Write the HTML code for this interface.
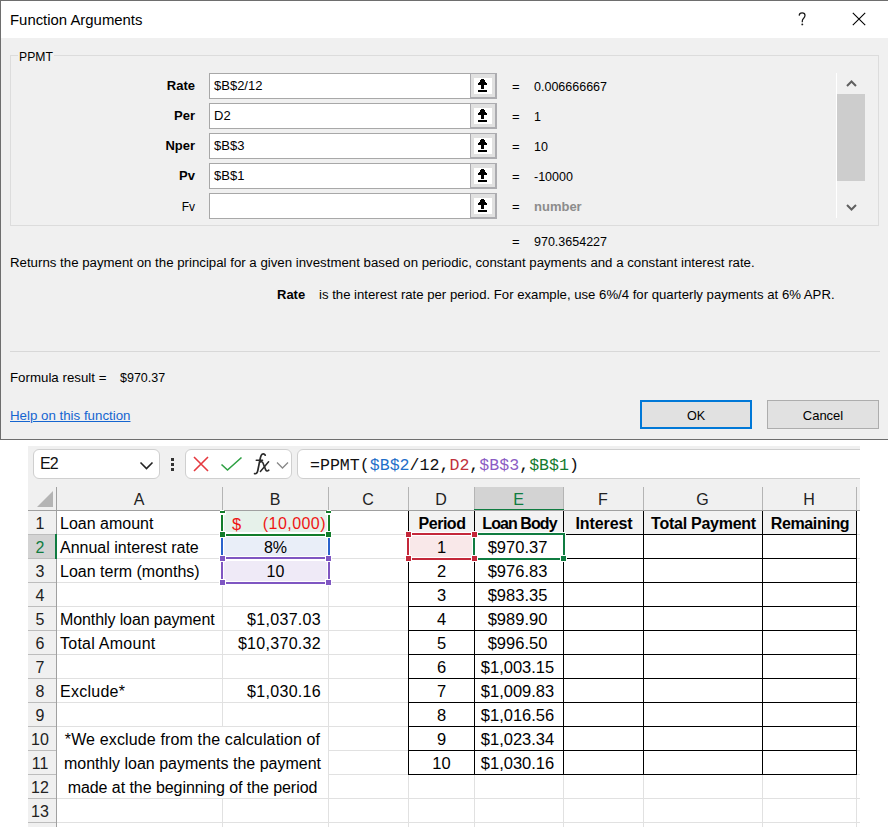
<!DOCTYPE html>
<html><head><meta charset="utf-8">
<style>
*{margin:0;padding:0;box-sizing:border-box}
html,body{width:888px;height:827px;overflow:hidden;background:#fff;font-family:"Liberation Sans",sans-serif;color:#000}
div,span,svg{position:absolute}
.t{white-space:nowrap;font-size:13px;line-height:16px}
.lbl{white-space:nowrap;font-size:13px;line-height:16px;text-align:right;width:100px;left:95px}
.inp{left:209px;width:262px;height:26px;background:#fff;border:1px solid #a8a8a8}
.inp span{left:4px;top:4px;font-size:13px;line-height:16px;white-space:nowrap}
.eq{left:512px;font-size:13px;line-height:16px}
.val{left:534px;font-size:12.5px;line-height:16px;white-space:nowrap}
.ch{top:488px;height:23px;font-size:16px;line-height:23px;text-align:center;color:#222}
.rh{left:28px;width:28px;height:24px;font-size:16px;line-height:24px;text-align:center;color:#222}
.c{height:24px;font-size:16px;line-height:24px;white-space:nowrap}
.mono{font-family:"Liberation Mono",monospace}
</style></head><body>
<div style="left:0;top:0;width:900px;height:440px;background:#f0f0f0;border:1px solid #6e6e6e;border-right:none"></div>
<div style="left:1px;top:1px;width:900px;height:37px;background:#fff"></div>
<div class="t" style="left:10px;top:11px;font-size:14.9px;line-height:18px">Function Arguments</div>
<svg style="left:797px;top:11px" width="10" height="16"><path d="M2.2 4.6C2.3 2.8 3.5 1.9 5.1 1.9C6.9 1.9 8 3 8 4.6C8 6.1 7.2 6.9 6.3 7.7C5.6 8.3 5.3 9 5.3 10.2V11.3" fill="none" stroke="#1a1a1a" stroke-width="1.25"/><circle cx="5.3" cy="13.4" r="0.95" fill="#1a1a1a"/></svg>
<svg style="left:852px;top:12px" width="14" height="14"><path d="M0.8 0.8L13.2 13.2M13.2 0.8L0.8 13.2" stroke="#000" stroke-width="1.1"/></svg>
<div style="left:10px;top:55px;width:869px;height:171px;border:1px solid #dcdcdc"></div>
<div class="t" style="left:18px;top:49px;padding:0 1px;background:#f0f0f0;font-size:12.2px">PPMT</div>
<div class="lbl" style="top:78px;font-weight:bold">Rate</div>
<div class="inp" style="top:73px"><span>$B$2/12</span></div>
<div style="left:470px;top:73px;width:27px;height:26px;background:#acacb0"></div>
<div style="left:471px;top:74px;width:24px;height:23px;background:#e1e1e1"></div>
<div style="left:474px;top:78px;width:18px;height:16px;background:#fff"></div>
<svg style="left:478px;top:79px" width="9" height="13" shape-rendering="crispEdges"><path d="M3 0H6V1H7V3H8V4H9V6H6V10H3V6H0V4H1V3H2V1H3Z M0 11H9V13H0Z" fill="#000"/></svg>
<div class="eq" style="top:79px">=</div>
<div class="val" style="top:79px">0.006666667</div>
<div class="lbl" style="top:108px;font-weight:bold">Per</div>
<div class="inp" style="top:103px"><span>D2</span></div>
<div style="left:470px;top:103px;width:27px;height:26px;background:#acacb0"></div>
<div style="left:471px;top:104px;width:24px;height:23px;background:#e1e1e1"></div>
<div style="left:474px;top:108px;width:18px;height:16px;background:#fff"></div>
<svg style="left:478px;top:109px" width="9" height="13" shape-rendering="crispEdges"><path d="M3 0H6V1H7V3H8V4H9V6H6V10H3V6H0V4H1V3H2V1H3Z M0 11H9V13H0Z" fill="#000"/></svg>
<div class="eq" style="top:109px">=</div>
<div class="val" style="top:109px">1</div>
<div class="lbl" style="top:138px;font-weight:bold">Nper</div>
<div class="inp" style="top:133px"><span>$B$3</span></div>
<div style="left:470px;top:133px;width:27px;height:26px;background:#acacb0"></div>
<div style="left:471px;top:134px;width:24px;height:23px;background:#e1e1e1"></div>
<div style="left:474px;top:138px;width:18px;height:16px;background:#fff"></div>
<svg style="left:478px;top:139px" width="9" height="13" shape-rendering="crispEdges"><path d="M3 0H6V1H7V3H8V4H9V6H6V10H3V6H0V4H1V3H2V1H3Z M0 11H9V13H0Z" fill="#000"/></svg>
<div class="eq" style="top:139px">=</div>
<div class="val" style="top:139px">10</div>
<div class="lbl" style="top:168px;font-weight:bold">Pv</div>
<div class="inp" style="top:163px"><span>$B$1</span></div>
<div style="left:470px;top:163px;width:27px;height:26px;background:#acacb0"></div>
<div style="left:471px;top:164px;width:24px;height:23px;background:#e1e1e1"></div>
<div style="left:474px;top:168px;width:18px;height:16px;background:#fff"></div>
<svg style="left:478px;top:169px" width="9" height="13" shape-rendering="crispEdges"><path d="M3 0H6V1H7V3H8V4H9V6H6V10H3V6H0V4H1V3H2V1H3Z M0 11H9V13H0Z" fill="#000"/></svg>
<div class="eq" style="top:169px">=</div>
<div class="val" style="top:169px">-10000</div>
<div class="lbl" style="top:199px;font-size:12px">Fv</div>
<div class="inp" style="top:193px"><span></span></div>
<div style="left:470px;top:193px;width:27px;height:26px;background:#acacb0"></div>
<div style="left:471px;top:194px;width:24px;height:23px;background:#e1e1e1"></div>
<div style="left:474px;top:198px;width:18px;height:16px;background:#fff"></div>
<svg style="left:478px;top:199px" width="9" height="13" shape-rendering="crispEdges"><path d="M3 0H6V1H7V3H8V4H9V6H6V10H3V6H0V4H1V3H2V1H3Z M0 11H9V13H0Z" fill="#000"/></svg>
<div class="eq" style="top:199px">=</div>
<div class="val" style="top:199px;color:#8c8c8c;font-weight:bold;font-size:13px">number</div>
<div style="left:836px;top:73px;width:1px;height:145px;background:#fff"></div>
<div style="left:837px;top:94px;width:28px;height:87px;background:#cdcdcd"></div>
<svg style="left:846px;top:79px" width="11" height="9"><path d="M1 7L5.5 2.5L10 7" fill="none" stroke="#606060" stroke-width="2"/></svg>
<svg style="left:846px;top:203px" width="11" height="9"><path d="M1 2L5.5 6.5L10 2" fill="none" stroke="#606060" stroke-width="2"/></svg>
<div class="eq" style="top:234px">=</div><div class="val" style="top:234px">970.3654227</div>
<div class="t" style="left:10px;top:255px;font-size:13.25px">Returns the payment on the principal for a given investment based on periodic, constant payments and a constant interest rate.</div>
<div class="t" style="left:277px;top:287px;font-weight:bold">Rate</div>
<div class="t" style="left:319px;top:287px;font-size:13.17px">is the interest rate per period. For example, use 6%/4 for quarterly payments at 6% APR.</div>
<div style="left:10px;top:351px;width:870px;height:1px;background:#d8d8d8"></div>
<div class="t" style="left:10px;top:370px;font-size:13.3px">Formula result =</div>
<div class="t" style="left:120px;top:370px;font-size:12.5px">$970.37</div>
<div class="t" style="left:10px;top:408px;font-size:13.3px;color:#1565d0;text-decoration:underline">Help on this function</div>
<div style="left:640px;top:400px;width:112px;height:29px;background:#e1e1e1;border:2px solid #0078d7"></div>
<div class="t" style="left:640px;top:408px;width:112px;text-align:center;font-size:12.6px">OK</div>
<div style="left:767px;top:400px;width:112px;height:29px;background:#e1e1e1;border:1px solid #adadad"></div>
<div class="t" style="left:767px;top:408px;width:112px;text-align:center">Cancel</div>
<div style="left:28px;top:446px;width:832px;height:64px;background:#f0f0f0"></div>
<div style="left:28px;top:510px;width:28px;height:317px;background:#f0f0f0"></div>
<div style="left:33px;top:449px;width:127px;height:30px;background:#fff;border:1px solid #cfcfcf;border-radius:6px"></div>
<div class="c" style="left:40px;top:451px;line-height:26px;color:#111;font-size:16px;letter-spacing:-1px">E2</div>
<svg style="left:139px;top:460px" width="15" height="11"><path d="M1.5 2.5L7.5 8.5L13.5 2.5" fill="none" stroke="#222" stroke-width="1.6"/></svg>
<div style="left:171px;top:458px;width:3px;height:3px;background:#333"></div>
<div style="left:171px;top:463px;width:3px;height:3px;background:#333"></div>
<div style="left:171px;top:468px;width:3px;height:3px;background:#333"></div>
<div style="left:185px;top:449px;width:107px;height:30px;background:#fff;border:1px solid #cfcfcf;border-radius:6px"></div>
<svg style="left:192px;top:455px" width="18" height="18"><path d="M2 2L16 16M16 2L2 16" stroke="#e5393f" stroke-width="1.6"/></svg>
<svg style="left:220px;top:456px" width="23" height="16"><path d="M1.5 8.5L7.5 14L21.5 1.5" fill="none" stroke="#2ea043" stroke-width="1.6"/></svg>
<svg style="left:250px;top:452px" width="22" height="24"><g fill="none" stroke="#2a2a2a" stroke-linecap="round"><path d="M15.2 3.2C14.5 1.6 12.2 1.4 11.2 3.4C10.6 4.6 10.2 6.5 9.8 8.5L7.8 18.5C7.3 21 6.2 22.2 4.6 21.6" stroke-width="1.7"/><path d="M6.2 8.3H12.6" stroke-width="1.4"/><path d="M9.8 10.2C11.2 9.2 12.4 9.6 13 11L15.6 17.6C16.2 19.2 17.4 19.4 18.8 18.2" stroke-width="1.6"/><path d="M18.6 9.8L10.4 19.4" stroke-width="1.5"/></g></svg>
<svg style="left:276px;top:461px" width="13" height="9"><path d="M1 1.5L6.5 7L12 1.5" fill="none" stroke="#888" stroke-width="1.3"/></svg>
<div style="left:297px;top:449px;width:600px;height:30px;background:#fff;border:1px solid #cfcfcf;border-radius:6px"></div>
<div class="mono" style="left:310px;top:454px;font-size:16.6px;line-height:24px;white-space:nowrap;color:#111">=PPMT(<span style="position:static;color:#1f6fc9">$B$2</span>/12,<span style="position:static;color:#c0313b">D2</span>,<span style="position:static;color:#8b5cc4">$B$3</span>,<span style="position:static;color:#157a2f">$B$1</span>)</div>
<div style="left:860px;top:440px;width:40px;height:400px;background:#fff"></div>
<div style="left:56px;top:487px;width:1px;height:23px;background:#b4b4b4"></div>
<div style="left:222px;top:487px;width:1px;height:23px;background:#b4b4b4"></div>
<div style="left:328px;top:487px;width:1px;height:23px;background:#b4b4b4"></div>
<div style="left:408px;top:487px;width:1px;height:23px;background:#b4b4b4"></div>
<div style="left:474px;top:487px;width:1px;height:23px;background:#b4b4b4"></div>
<div style="left:563px;top:487px;width:1px;height:23px;background:#b4b4b4"></div>
<div style="left:643px;top:487px;width:1px;height:23px;background:#b4b4b4"></div>
<div style="left:762px;top:487px;width:1px;height:23px;background:#b4b4b4"></div>
<div style="left:856px;top:487px;width:1px;height:23px;background:#b4b4b4"></div>
<div style="left:475px;top:487px;width:88px;height:23px;background:#d3d3d3"></div>
<div style="left:474px;top:509px;width:90px;height:2px;background:#107c41"></div>
<div class="ch" style="left:56px;width:166px;color:#222">A</div>
<div class="ch" style="left:222px;width:106px;color:#222">B</div>
<div class="ch" style="left:328px;width:80px;color:#222">C</div>
<div class="ch" style="left:408px;width:66px;color:#222">D</div>
<div class="ch" style="left:474px;width:89px;color:#107c41">E</div>
<div class="ch" style="left:563px;width:80px;color:#222">F</div>
<div class="ch" style="left:643px;width:119px;color:#222">G</div>
<div class="ch" style="left:762px;width:94px;color:#222">H</div>
<div style="left:28px;top:510px;width:832px;height:1px;background:#a0a0a0"></div>
<div style="left:56px;top:487px;width:1px;height:340px;background:#a0a0a0"></div>
<svg style="left:37px;top:491px" width="17" height="17"><path d="M16 0V16H0Z" fill="#b4b4b4"/></svg>
<div style="left:28px;top:534px;width:28px;height:1px;background:#bdbdbd"></div>
<div style="left:57px;top:534px;width:803px;height:1px;background:#e1e1e1"></div>
<div style="left:28px;top:558px;width:28px;height:1px;background:#bdbdbd"></div>
<div style="left:57px;top:558px;width:803px;height:1px;background:#e1e1e1"></div>
<div style="left:28px;top:582px;width:28px;height:1px;background:#bdbdbd"></div>
<div style="left:57px;top:582px;width:803px;height:1px;background:#e1e1e1"></div>
<div style="left:28px;top:606px;width:28px;height:1px;background:#bdbdbd"></div>
<div style="left:57px;top:606px;width:803px;height:1px;background:#e1e1e1"></div>
<div style="left:28px;top:630px;width:28px;height:1px;background:#bdbdbd"></div>
<div style="left:57px;top:630px;width:803px;height:1px;background:#e1e1e1"></div>
<div style="left:28px;top:654px;width:28px;height:1px;background:#bdbdbd"></div>
<div style="left:57px;top:654px;width:803px;height:1px;background:#e1e1e1"></div>
<div style="left:28px;top:678px;width:28px;height:1px;background:#bdbdbd"></div>
<div style="left:57px;top:678px;width:803px;height:1px;background:#e1e1e1"></div>
<div style="left:28px;top:702px;width:28px;height:1px;background:#bdbdbd"></div>
<div style="left:57px;top:702px;width:803px;height:1px;background:#e1e1e1"></div>
<div style="left:28px;top:726px;width:28px;height:1px;background:#bdbdbd"></div>
<div style="left:57px;top:726px;width:803px;height:1px;background:#e1e1e1"></div>
<div style="left:28px;top:750px;width:28px;height:1px;background:#bdbdbd"></div>
<div style="left:57px;top:750px;width:803px;height:1px;background:#e1e1e1"></div>
<div style="left:28px;top:774px;width:28px;height:1px;background:#bdbdbd"></div>
<div style="left:57px;top:774px;width:803px;height:1px;background:#e1e1e1"></div>
<div style="left:28px;top:798px;width:28px;height:1px;background:#bdbdbd"></div>
<div style="left:57px;top:798px;width:803px;height:1px;background:#e1e1e1"></div>
<div style="left:28px;top:822px;width:28px;height:1px;background:#bdbdbd"></div>
<div style="left:57px;top:822px;width:803px;height:1px;background:#e1e1e1"></div>
<div style="left:222px;top:511px;width:1px;height:316px;background:#e1e1e1"></div>
<div style="left:328px;top:511px;width:1px;height:316px;background:#e1e1e1"></div>
<div style="left:408px;top:511px;width:1px;height:316px;background:#e1e1e1"></div>
<div style="left:474px;top:511px;width:1px;height:316px;background:#e1e1e1"></div>
<div style="left:563px;top:511px;width:1px;height:316px;background:#e1e1e1"></div>
<div style="left:643px;top:511px;width:1px;height:316px;background:#e1e1e1"></div>
<div style="left:762px;top:511px;width:1px;height:316px;background:#e1e1e1"></div>
<div style="left:856px;top:511px;width:1px;height:316px;background:#e1e1e1"></div>
<div style="left:28px;top:535px;width:27px;height:23px;background:#d3d3d3"></div>
<div style="left:55px;top:534px;width:2px;height:25px;background:#107c41"></div>
<div class="rh" style="top:512px;left:26px;color:#222">1</div>
<div class="rh" style="top:536px;left:26px;color:#107c41">2</div>
<div class="rh" style="top:560px;left:26px;color:#222">3</div>
<div class="rh" style="top:584px;left:26px;color:#222">4</div>
<div class="rh" style="top:608px;left:26px;color:#222">5</div>
<div class="rh" style="top:632px;left:26px;color:#222">6</div>
<div class="rh" style="top:656px;left:26px;color:#222">7</div>
<div class="rh" style="top:680px;left:26px;color:#222">8</div>
<div class="rh" style="top:704px;left:26px;color:#222">9</div>
<div class="rh" style="top:728px;left:26px;color:#222">10</div>
<div class="rh" style="top:752px;left:26px;color:#222">11</div>
<div class="rh" style="top:776px;left:26px;color:#222">12</div>
<div class="rh" style="top:800px;left:26px;color:#222">13</div>
<div style="left:57px;top:727px;width:271px;height:71px;background:#fff"></div>
<div style="left:409px;top:511px;width:447px;height:23px;background:#f2f2f2"></div>
<div style="left:223px;top:511px;width:105px;height:23px;background:#e6f1ea"></div>
<div style="left:223px;top:535px;width:105px;height:23px;background:#e9eef8"></div>
<div style="left:223px;top:559px;width:105px;height:23px;background:#efeaf7"></div>
<div style="left:409px;top:535px;width:65px;height:23px;background:#f9e8e9"></div>
<div style="left:408px;top:534px;width:449px;height:1px;background:#000"></div>
<div style="left:408px;top:558px;width:449px;height:1px;background:#000"></div>
<div style="left:408px;top:582px;width:449px;height:1px;background:#000"></div>
<div style="left:408px;top:606px;width:449px;height:1px;background:#000"></div>
<div style="left:408px;top:630px;width:449px;height:1px;background:#000"></div>
<div style="left:408px;top:654px;width:449px;height:1px;background:#000"></div>
<div style="left:408px;top:678px;width:449px;height:1px;background:#000"></div>
<div style="left:408px;top:702px;width:449px;height:1px;background:#000"></div>
<div style="left:408px;top:726px;width:449px;height:1px;background:#000"></div>
<div style="left:408px;top:750px;width:449px;height:1px;background:#000"></div>
<div style="left:408px;top:774px;width:449px;height:1px;background:#000"></div>
<div style="left:408px;top:511px;width:1px;height:264px;background:#000"></div>
<div style="left:474px;top:511px;width:1px;height:264px;background:#000"></div>
<div style="left:563px;top:511px;width:1px;height:264px;background:#000"></div>
<div style="left:643px;top:511px;width:1px;height:264px;background:#000"></div>
<div style="left:762px;top:511px;width:1px;height:264px;background:#000"></div>
<div style="left:856px;top:511px;width:1px;height:264px;background:#000"></div>
<div class="c" style="left:60px;top:512px;">Loan amount</div>
<div class="c" style="left:60px;top:536px;">Annual interest rate</div>
<div class="c" style="left:60px;top:560px;">Loan term (months)</div>
<div class="c" style="left:60px;top:608px;letter-spacing:-0.1px">Monthly loan payment</div>
<div class="c" style="left:60px;top:632px;letter-spacing:0.25px">Total Amount</div>
<div class="c" style="left:60px;top:680px;letter-spacing:0.25px">Exclude*</div>
<div class="c" style="left:232px;top:512px;color:#ee1515;font-size:16.5px">$</div>
<div class="c" style="left:223px;width:103px;text-align:right;top:512px;color:#ee1515;letter-spacing:0.45px">(10,000)</div>
<div class="c" style="left:223px;width:105px;text-align:center;top:536px;">8%</div>
<div class="c" style="left:223px;width:105px;text-align:center;top:560px;">10</div>
<div class="c" style="left:223px;width:98px;text-align:right;top:608px;letter-spacing:0.3px">$1,037.03</div>
<div class="c" style="left:223px;width:98px;text-align:right;top:632px;letter-spacing:0.3px">$10,370.32</div>
<div class="c" style="left:223px;width:98px;text-align:right;top:680px;letter-spacing:0.3px">$1,030.16</div>
<div class="c" style="left:57px;width:271px;text-align:center;top:728px;letter-spacing:0.14px">*We exclude from the calculation of</div>
<div class="c" style="left:57px;width:271px;text-align:center;top:752px;">monthly loan payments the payment</div>
<div class="c" style="left:57px;width:271px;text-align:center;top:776px;letter-spacing:-0.06px">made at the beginning of the period</div>
<div class="c" style="left:409px;width:66px;text-align:center;top:512px;font-weight:bold;font-size:16px;letter-spacing:-0.47px">Period</div>
<div class="c" style="left:475px;width:89px;text-align:center;top:512px;font-weight:bold;font-size:16px;letter-spacing:-0.92px">Loan Body</div>
<div class="c" style="left:564px;width:80px;text-align:center;top:512px;font-weight:bold;font-size:16px;letter-spacing:-0.1px">Interest</div>
<div class="c" style="left:644px;width:119px;text-align:center;top:512px;font-weight:bold;font-size:16px;letter-spacing:-0.26px">Total Payment</div>
<div class="c" style="left:763px;width:94px;text-align:center;top:512px;font-weight:bold;font-size:16px;letter-spacing:-0.37px">Remaining</div>
<div class="c" style="left:408px;width:67px;text-align:center;top:535px;font-size:16.5px">1</div>
<div class="c" style="left:473px;width:89px;text-align:center;top:535px;font-size:16.5px">$970.37</div>
<div class="c" style="left:408px;width:67px;text-align:center;top:559px;font-size:16.5px">2</div>
<div class="c" style="left:473px;width:89px;text-align:center;top:559px;font-size:16.5px">$976.83</div>
<div class="c" style="left:408px;width:67px;text-align:center;top:583px;font-size:16.5px">3</div>
<div class="c" style="left:473px;width:89px;text-align:center;top:583px;font-size:16.5px">$983.35</div>
<div class="c" style="left:408px;width:67px;text-align:center;top:607px;font-size:16.5px">4</div>
<div class="c" style="left:473px;width:89px;text-align:center;top:607px;font-size:16.5px">$989.90</div>
<div class="c" style="left:408px;width:67px;text-align:center;top:631px;font-size:16.5px">5</div>
<div class="c" style="left:473px;width:89px;text-align:center;top:631px;font-size:16.5px">$996.50</div>
<div class="c" style="left:408px;width:67px;text-align:center;top:655px;font-size:16.5px">6</div>
<div class="c" style="left:473px;width:89px;text-align:center;top:655px;font-size:16.5px">$1,003.15</div>
<div class="c" style="left:408px;width:67px;text-align:center;top:679px;font-size:16.5px">7</div>
<div class="c" style="left:473px;width:89px;text-align:center;top:679px;font-size:16.5px">$1,009.83</div>
<div class="c" style="left:408px;width:67px;text-align:center;top:703px;font-size:16.5px">8</div>
<div class="c" style="left:473px;width:89px;text-align:center;top:703px;font-size:16.5px">$1,016.56</div>
<div class="c" style="left:408px;width:67px;text-align:center;top:727px;font-size:16.5px">9</div>
<div class="c" style="left:473px;width:89px;text-align:center;top:727px;font-size:16.5px">$1,023.34</div>
<div class="c" style="left:408px;width:67px;text-align:center;top:751px;font-size:16.5px">10</div>
<div class="c" style="left:473px;width:89px;text-align:center;top:751px;font-size:16.5px">$1,030.16</div>
<div style="left:220px;top:532px;width:111px;height:4px;background:#fff"></div>
<div style="left:220px;top:557px;width:111px;height:4px;background:#fff"></div>
<div style="left:220px;top:532px;width:4px;height:29px;background:#fff"></div>
<div style="left:327px;top:532px;width:4px;height:29px;background:#fff"></div>
<div style="left:221px;top:533px;width:109px;height:2px;background:#2b62cc"></div>
<div style="left:221px;top:558px;width:109px;height:2px;background:#2b62cc"></div>
<div style="left:221px;top:533px;width:2px;height:27px;background:#2b62cc"></div>
<div style="left:328px;top:533px;width:2px;height:27px;background:#2b62cc"></div>
<div style="left:220px;top:556px;width:111px;height:4px;background:#fff"></div>
<div style="left:220px;top:581px;width:111px;height:4px;background:#fff"></div>
<div style="left:220px;top:556px;width:4px;height:29px;background:#fff"></div>
<div style="left:327px;top:556px;width:4px;height:29px;background:#fff"></div>
<div style="left:221px;top:557px;width:109px;height:2px;background:#7f56c2"></div>
<div style="left:221px;top:582px;width:109px;height:2px;background:#7f56c2"></div>
<div style="left:221px;top:557px;width:2px;height:27px;background:#7f56c2"></div>
<div style="left:328px;top:557px;width:2px;height:27px;background:#7f56c2"></div>
<div style="left:220px;top:556px;width:5px;height:5px;background:#7f56c2;box-shadow:0 0 0 1px #fff"></div>
<div style="left:220px;top:580px;width:5px;height:5px;background:#7f56c2;box-shadow:0 0 0 1px #fff"></div>
<div style="left:326px;top:556px;width:5px;height:5px;background:#7f56c2;box-shadow:0 0 0 1px #fff"></div>
<div style="left:326px;top:580px;width:5px;height:5px;background:#7f56c2;box-shadow:0 0 0 1px #fff"></div>
<div style="left:220px;top:533px;width:111px;height:4px;background:#fff"></div>
<div style="left:220px;top:510px;width:4px;height:27px;background:#fff"></div>
<div style="left:327px;top:510px;width:4px;height:27px;background:#fff"></div>
<div style="left:221px;top:534px;width:109px;height:2px;background:#127c2a"></div>
<div style="left:221px;top:511px;width:2px;height:25px;background:#127c2a"></div>
<div style="left:328px;top:511px;width:2px;height:25px;background:#127c2a"></div>
<div style="left:220px;top:511px;width:5px;height:2px;background:#127c2a;box-shadow:0 1px 0 1px #fff"></div>
<div style="left:220px;top:532px;width:5px;height:5px;background:#127c2a;box-shadow:0 0 0 1px #fff"></div>
<div style="left:326px;top:511px;width:5px;height:2px;background:#127c2a;box-shadow:0 1px 0 1px #fff"></div>
<div style="left:326px;top:532px;width:5px;height:5px;background:#127c2a;box-shadow:0 0 0 1px #fff"></div>
<div style="left:406px;top:532px;width:71px;height:4px;background:#fff"></div>
<div style="left:406px;top:557px;width:71px;height:4px;background:#fff"></div>
<div style="left:406px;top:532px;width:4px;height:29px;background:#fff"></div>
<div style="left:473px;top:532px;width:4px;height:29px;background:#fff"></div>
<div style="left:407px;top:533px;width:69px;height:2px;background:#c4283a"></div>
<div style="left:407px;top:558px;width:69px;height:2px;background:#c4283a"></div>
<div style="left:407px;top:533px;width:2px;height:27px;background:#c4283a"></div>
<div style="left:474px;top:533px;width:2px;height:27px;background:#c4283a"></div>
<div style="left:472px;top:532px;width:94px;height:4px;background:#fff"></div>
<div style="left:472px;top:557px;width:94px;height:4px;background:#fff"></div>
<div style="left:472px;top:532px;width:4px;height:29px;background:#fff"></div>
<div style="left:562px;top:532px;width:4px;height:29px;background:#fff"></div>
<div style="left:473px;top:533px;width:92px;height:2px;background:#107c41"></div>
<div style="left:473px;top:558px;width:92px;height:2px;background:#107c41"></div>
<div style="left:473px;top:533px;width:2px;height:27px;background:#107c41"></div>
<div style="left:563px;top:533px;width:2px;height:27px;background:#107c41"></div>
<div style="left:406px;top:532px;width:5px;height:5px;background:#c4283a;box-shadow:0 0 0 1px #fff"></div>
<div style="left:406px;top:556px;width:5px;height:5px;background:#c4283a;box-shadow:0 0 0 1px #fff"></div>
<div style="left:472px;top:532px;width:5px;height:5px;background:#c4283a;box-shadow:0 0 0 1px #fff"></div>
<div style="left:472px;top:556px;width:5px;height:5px;background:#c4283a;box-shadow:0 0 0 1px #fff"></div>
<div style="left:561px;top:556px;width:5px;height:5px;background:#107c41;box-shadow:0 0 0 1px #fff"></div>
</body></html>
